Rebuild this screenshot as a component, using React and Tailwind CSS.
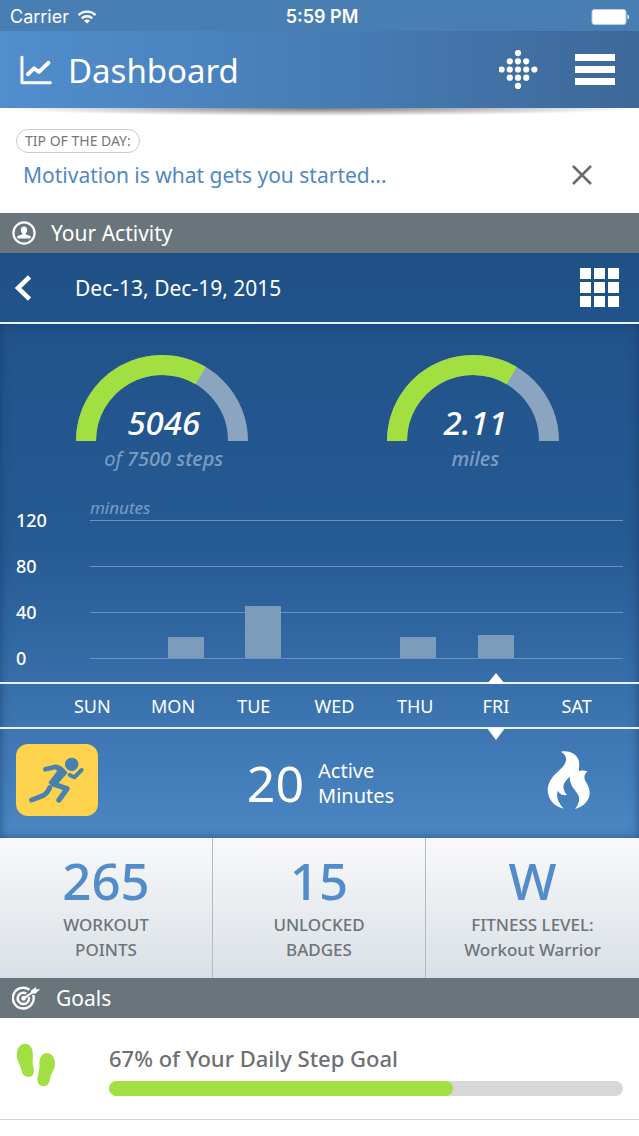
import { useState } from 'react';

const DAYS = [
  { name: 'SUN', minutes: 0 },
  { name: 'MON', minutes: 18 },
  { name: 'TUE', minutes: 45 },
  { name: 'WED', minutes: 0 },
  { name: 'THU', minutes: 18 },
  { name: 'FRI', minutes: 20 },
  { name: 'SAT', minutes: 0 },
];

const TICKS = [120, 80, 40, 0];

const STATS = [
  { value: '265', lines: ['WORKOUT', 'POINTS'] },
  { value: '15', lines: ['UNLOCKED', 'BADGES'] },
  { value: 'W', lines: ['FITNESS LEVEL:', 'Workout Warrior'] },
];

// Fitbit style diamond: dots per row
const DOT_ROWS = [1, 3, 5, 3, 1];

function StatusBar() {
  return (
    <div className="flex items-center justify-between h-[31px] pt-0.5 px-2.5 bg-[#487eb2] text-white font-['Inter',sans-serif]">
      <div className="flex items-center gap-2 text-lg leading-6">
        Carrier
        <svg className="w-5 h-4" viewBox="0 0 20 16" fill="none" stroke="currentColor" strokeWidth={2.4}>
          <path d="M1.5 6.2a12 12 0 0 1 17 0" />
          <path d="M4.8 9.4a7.4 7.4 0 0 1 10.4 0" />
          <path d="M10 14.6 7 11.8a4.2 4.2 0 0 1 6 0z" fill="currentColor" stroke="none" />
        </svg>
      </div>
      <div className="mr-11 text-lg leading-6 font-semibold">5:59 PM</div>
      <svg className="w-[38px] h-4" viewBox="0 0 38 16">
        <rect x="1" y="0.5" width="34" height="15" rx="2.5" fill="#fff" stroke="#b9cfe5" />
        <path d="M36.5 5.5c2 1 2 4 0 5z" fill="#fff" />
      </svg>
    </div>
  );
}

function Header() {
  return (
    <header className="relative flex items-center h-[77px] pl-5 pr-6 bg-linear-to-r from-[#518ecd] via-[#477db6] to-[#3d6899] text-white">
      <svg className="w-8 h-[30px]" viewBox="60 166 98 90" fill="none" stroke="currentColor" strokeLinecap="round" strokeLinejoin="round">
        <path d="M66 172v78h87" strokeWidth={9} />
        <path d="M84 224l19-18 15 11 29-28" strokeWidth={12} />
      </svg>
      <h1 className="flex-1 ml-4 pt-0.5 text-[33px] leading-10">Dashboard</h1>
      <button aria-label="Sync tracker">
        <svg className="w-10 h-10" viewBox="0 0 40 40" fill="currentColor">
          {DOT_ROWS.map((count, row) =>
            Array.from({ length: count }, (_, i) => (
              <circle key={`${row}-${i}`} cx={19 + (i - (count - 1) / 2) * 8.2} cy={19.5 + (row - 2) * 8.2} r={3.1} />
            ))
          )}
        </svg>
      </button>
      <button aria-label="Menu" className="flex flex-col gap-[5px] ml-9 w-10">
        <span className="h-[7px] bg-white" />
        <span className="h-[7px] bg-white" />
        <span className="h-[7px] bg-white" />
      </button>
      <div className="absolute inset-x-0 top-full h-2 bg-[radial-gradient(ellipse_50%_100%_at_50%_0%,#77777b,transparent)]" />
    </header>
  );
}

function Tip({ onClose }) {
  return (
    <section className="flex items-center justify-between h-[105px] pl-4 pr-[47px] bg-white">
      <div className="flex flex-col items-start gap-1.5 pb-0.5">
        <span className="h-6 px-2 rounded-full border border-[#cfc8cd] text-sm leading-[22px] text-[#72787b]">
          TIP OF THE DAY:
        </span>
        <p className="ml-[7px] text-[21px] leading-8 text-[#4f88c4]">Motivation is what gets you started...</p>
      </div>
      <button aria-label="Close tip" onClick={onClose} className="mt-7">
        <svg className="w-5 h-5" viewBox="0 0 20 20" stroke="#666c70" strokeWidth={2.6}>
          <path d="M1 1l18 18M19 1L1 19" />
        </svg>
      </button>
    </section>
  );
}

function SectionBar({ icon, title }) {
  return (
    <div className="flex items-center gap-[15px] h-10 pl-3 bg-[#6a757b] text-white">
      {icon}
      <h2 className="text-[21px] leading-8">{title}</h2>
    </div>
  );
}

function PersonIcon() {
  return (
    <svg className="w-6 h-6" viewBox="0 0 24 24" fill="none">
      <circle cx="12" cy="12" r="10.6" stroke="currentColor" strokeWidth={2.2} />
      <path
        fill="currentColor"
        d="M12 5.5c2 0 3.2 1.5 3.2 3.5 0 1.500-.5 2.500-1.400 3.200v1.200c1.900.5 4.400 1 5 2.200.4.800 0 1.900-.6 1.900H5.800c-.6 0-1-1.100-.6-1.900.6-1.200 3.100-1.700 5-2.200v-1.200c-.9-.7-1.400-1.700-1.400-3.200 0-2 1.200-3.500 3.200-3.500z"
      />
    </svg>
  );
}

function TargetIcon() {
  return (
    <svg className="w-[29px] h-[26px]" viewBox="0 0 29 26" fill="none" stroke="currentColor">
      <path d="M17.5 4.8A10.4 10.4 0 1 0 21.2 10" strokeWidth={2.4} />
      <path d="M14.3 8.5A5.7 5.7 0 1 0 16.9 12" strokeWidth={2.5} />
      <circle cx="11.5" cy="13.4" r="2.3" fill="currentColor" stroke="none" />
      <path d="M11.5 13.4L22 6.5" strokeWidth={2} />
      <path d="M18.5 8.5l.8-3.2 5-3.3-.3 2.2 4.2.1-4.7 4.2z" fill="currentColor" stroke="none" />
    </svg>
  );
}

function Gauge({ ratio, value, children }) {
  const angle = Math.PI * (1 - ratio);
  const x = 86 + 76 * Math.cos(angle);
  const y = 86 - 76 * Math.sin(angle);
  return (
    <div className="flex flex-col items-center">
      <div className="relative">
        <svg className="w-[172px] h-[86px]" viewBox="0 0 172 86" fill="none" strokeWidth={20}>
          <path d="M10 86a76 76 0 0 1 152 0" stroke="#8ba5c1" />
          <path d={`M10 86A76 76 0 0 1 ${x} ${y}`} stroke="#a2e041" />
        </svg>
        <div className="absolute inset-x-0 -bottom-1 pl-1 text-center text-[33px] leading-[44px] font-medium italic">{value}</div>
      </div>
      <p className="mt-1 pl-1 text-xl leading-7 italic text-[#7d9dc4]">{children}</p>
    </div>
  );
}

function Chart() {
  return (
    <div className="relative mt-[22px] h-[187px] px-4">
      <span className="absolute left-[90px] top-px text-[17px] leading-6 italic text-[#7b9dc6]">minutes</span>
      <div className="pt-0.5">
        {TICKS.map((tick) => (
          <div key={tick} className="flex items-center h-[46px]">
            <span className="w-[74px] text-lg leading-6 font-medium">{tick}</span>
            <span className="flex-1 h-px bg-[#6b93be]" />
          </div>
        ))}
      </div>
      <div className="absolute left-[90px] right-12 bottom-[24px] h-[140px] flex items-end justify-between">
        {DAYS.map((d) => (
          <div key={d.name} className="w-9 bg-[#7d9cbc]" style={{ height: `${(d.minutes / 120) * 100}%` }} />
        ))}
      </div>
    </div>
  );
}

function RunnerIcon() {
  return (
    <svg className="w-[60px] h-[48px]" viewBox="80 62 180 144" fill="none" stroke="#4880b0" strokeLinecap="round" strokeLinejoin="round">
      <circle cx="214" cy="87" r="20" fill="#4880b0" stroke="none" />
      <path d="M135 102l29-7 16 5" strokeWidth={14} />
      <path d="M164 88q16-2 38 24l-30 34-12 8-16-12 26-34z" fill="#4880b0" stroke="none" />
      <path d="M157 145l43 15-24 34" strokeWidth={16} />
      <path d="M148 157q-8 18-20 24l-34 13" strokeWidth={15} />
      <path d="M208 119l14 7 22-22" strokeWidth={12} />
    </svg>
  );
}

function FlameIcon() {
  return (
    <svg className="w-11 h-[60px]" viewBox="0 0 132 180" fill="currentColor">
      <path d="M42 5C62 0 85 8 94 28c5 12 1 24 2 35 7-3 17-2 26 1-9 7-12 16-8 27 8 13 14 24 14 40-2 22-18 38-44 46 13-16 16-31 8-45-10-16-24-26-24-52-13 12-22 23-18 37 2 8 6 14 10 18-12 2-22-2-27-13-7 14-1 36 17 54C20 170 2 147 2 118c2-31 26-48 42-64 16-15 20-36-2-49z" />
    </svg>
  );
}

function Activity() {
  const [selected, setSelected] = useState('FRI');
  const day = DAYS.find((d) => d.name === selected);

  return (
    <section className="bg-linear-to-b from-[#1f5187] via-[#265a93] via-50% to-[#4b87c4] text-white">
      <div className="flex items-center h-[71px] pl-[15px] pr-5 border-b-2 border-white/90">
        <button aria-label="Previous week">
          <svg className="w-4 h-[26px]" viewBox="0 0 16 26" fill="none" stroke="currentColor" strokeWidth={4.5}>
            <path d="M14.5 2L3 13l11.5 11" />
          </svg>
        </button>
        <span className="flex-1 ml-11 text-[21px] leading-8">Dec-13, Dec-19, 2015</span>
        <button aria-label="Calendar" className="grid grid-cols-3 gap-[3px]">
          {Array.from({ length: 9 }, (_, i) => (
            <span key={i} className="w-[11px] h-[11px] bg-white" />
          ))}
        </button>
      </div>

      <div className="shadow-[inset_0_0_10px_rgba(20,50,90,0.6)]">
        <div className="grid grid-cols-2 pt-[31px] pl-1.5 pr-2.5">
          <Gauge ratio={0.67} value="5046">
            of <span className="font-medium">7500 steps</span>
          </Gauge>
          <Gauge ratio={0.67} value="2.11">
            <span className="font-medium">miles</span>
          </Gauge>
        </div>

        <Chart />

        <div className="grid grid-cols-7 h-[47px] pl-[52px] pr-[22px] border-y-2 border-white/90">
          {DAYS.map((d) => (
            <button key={d.name} onClick={() => setSelected(d.name)} className="relative text-lg">
              {d.name}
              {d.name === selected && (
                <svg className="absolute left-1/2 -translate-x-1/2 -top-3 w-5 h-[69px]" viewBox="0 0 20 69" fill="#fff">
                  <path d="M1 12L10 1l9 11zM1 56l9 12 9-12z" />
                </svg>
              )}
            </button>
          ))}
        </div>

        <div className="flex items-center justify-between h-[109px] pl-4 pr-12 pb-2">
          <button aria-label="Active minutes" className="grid place-items-center w-[82px] h-[72px] rounded-xl bg-[#fdd24c]">
            <RunnerIcon />
          </button>
          <div className="flex items-center gap-[14px] pr-1 pt-1.5">
            <span className="text-[50px] leading-[60px]">{day.minutes}</span>
            <span className="text-[20px] leading-[25px]">
              Active
              <br />
              Minutes
            </span>
          </div>
          <button aria-label="Calories">
            <FlameIcon />
          </button>
        </div>
      </div>
    </section>
  );
}

function Stats() {
  return (
    <section className="grid grid-cols-3 h-[140px] bg-linear-to-b from-[#f9f9fb] to-[#d9e0e5] text-center">
      {STATS.map((s) => (
        <div key={s.value} className="pt-[13px] border-r border-[#b4babf] last:border-r-0">
          <div className="text-[51px] leading-[58px] font-medium text-[#528cca]">{s.value}</div>
          <div className="mt-[3px] text-[17px] leading-[25px] font-medium text-[#6e7479]">
            {s.lines[0]}
            <br />
            {s.lines[1]}
          </div>
        </div>
      ))}
    </section>
  );
}

function StepGoal({ percent }) {
  return (
    <div className="flex items-center h-[102px] px-4 border-b border-[#d5d5d8] bg-white">
      <svg className="w-10 h-[44px] mb-2" viewBox="50 203 120 132" fill="#a2df43">
        <path d="M76 205C62 205 52 220 52 240c1 18 12 30 16 50 4 14 18 18 30 12 8-6 6-20 3-32-3-15 2-25-2-45-3-13-11-20-23-20z" />
        <path d="M142 233c-12 0-21 12-22 29 2 18-4 33-6 50 0 16 12 23 24 20 10-2 13-14 15-27 4-15 15-23 14-43-2-20-11-28-25-29z" />
      </svg>
      <div className="flex-1 ml-[53px]">
        <p id="step-goal" className="text-[22px] leading-8 font-medium text-[#6d7073]">{percent}% of Your Daily Step Goal</p>
        <div
          role="progressbar"
          aria-labelledby="step-goal"
          aria-valuenow={percent}
          className="mt-[7px] h-[15px] rounded-full bg-[#d7d7da] overflow-hidden"
        >
          <div className="h-full rounded-r-full bg-[#a2df43]" style={{ width: `${percent}%` }} />
        </div>
      </div>
    </div>
  );
}

export default function App() {
  const [showTip, setShowTip] = useState(true);

  return (
    <main className="min-h-screen bg-white font-['Noto_Sans','Open_Sans',sans-serif]">
      <StatusBar />
      <Header />
      {showTip && <Tip onClose={() => setShowTip(false)} />}
      <SectionBar icon={<PersonIcon />} title="Your Activity" />
      <Activity />
      <Stats />
      <SectionBar icon={<TargetIcon />} title="Goals" />
      <StepGoal percent={67} />
    </main>
  );
}
